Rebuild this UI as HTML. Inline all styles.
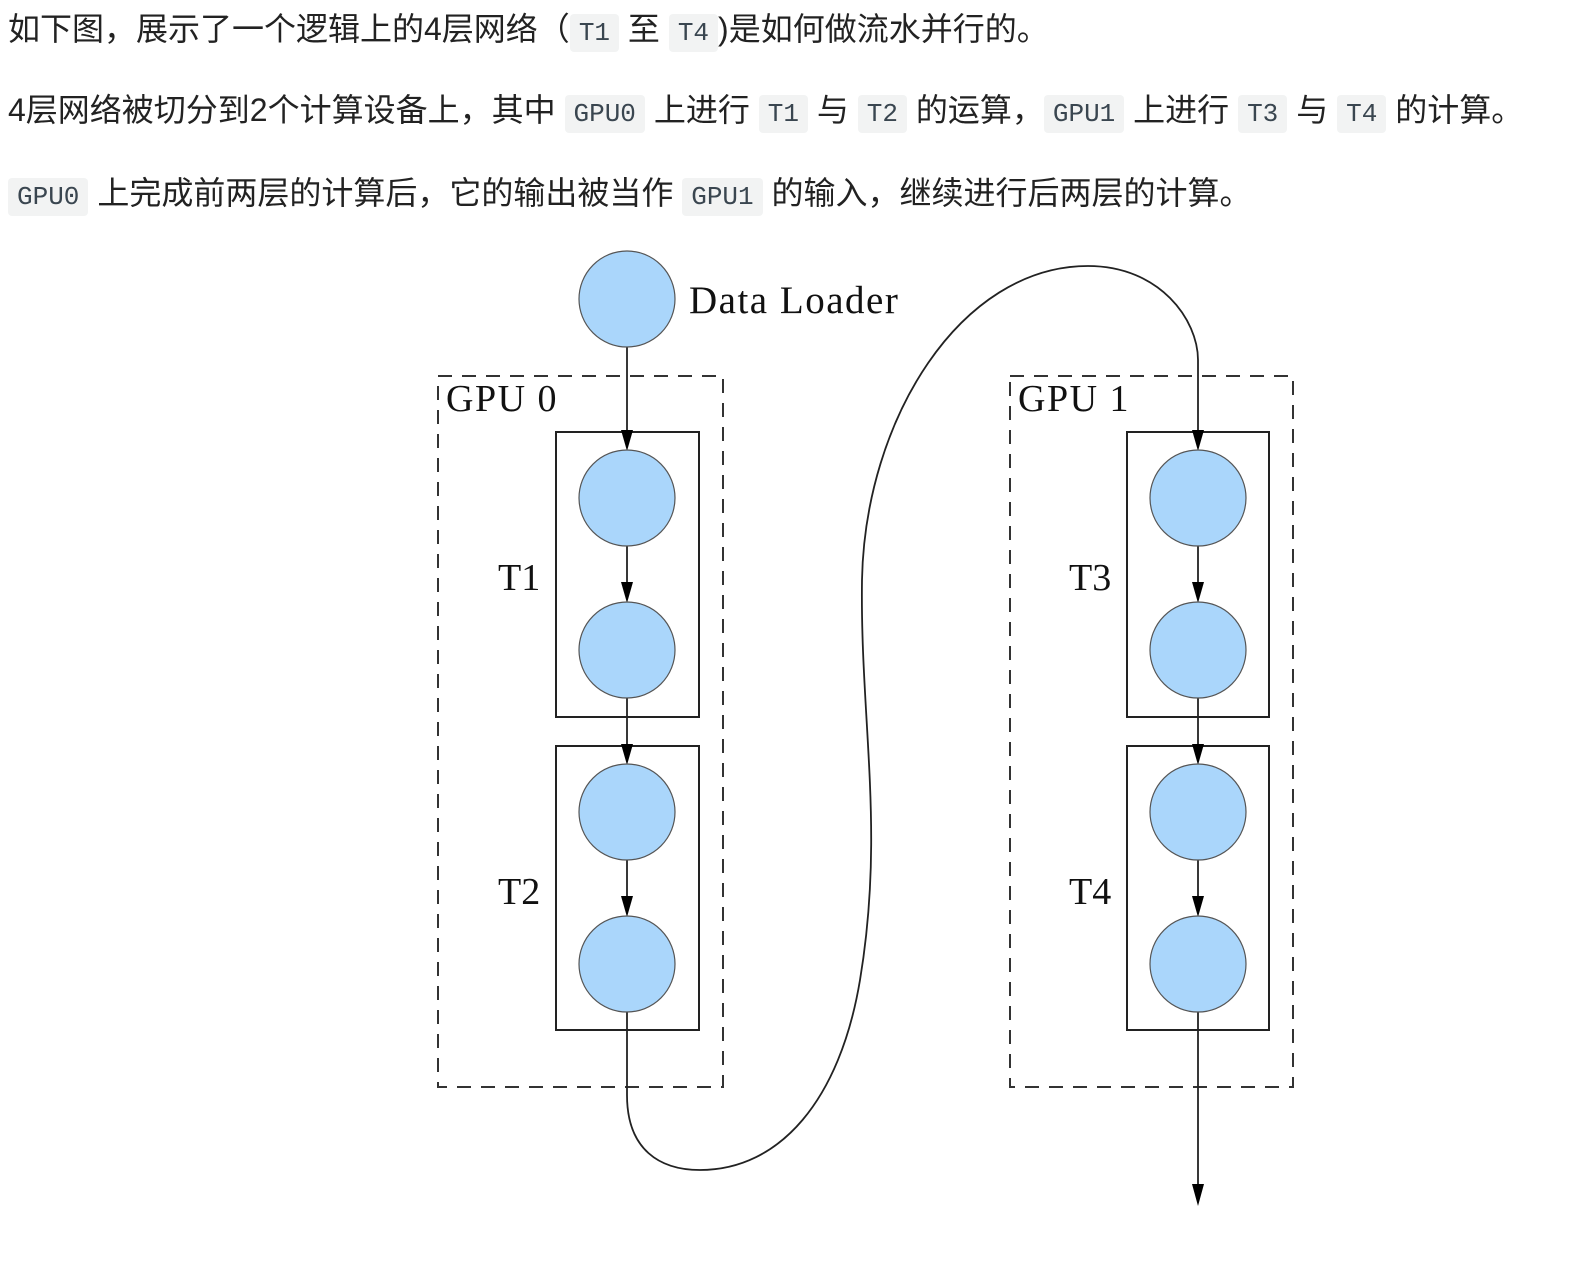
<!DOCTYPE html>
<html><head><meta charset="utf-8"><style>
html,body{margin:0;padding:0;background:#fff;width:1588px;height:1288px;overflow:hidden}
.l{position:absolute;left:8px;white-space:nowrap;font-family:"Liberation Sans","Noto Sans CJK SC",sans-serif;font-size:32px;color:#222;line-height:40px}
code{font-family:"Liberation Mono","DejaVu Sans Mono",monospace;font-size:26px;background:#f2f3f3;color:#3a4650;padding:4px 9px;border-radius:4px}
</style></head><body>
<div class="l" style="top:9px">如下图，展示了一个逻辑上的4层网络（<code>T1</code> 至 <code>T4</code>)是如何做流水并行的。</div>
<div class="l" style="top:90px">4层网络被切分到2个计算设备上，其中 <code>GPU0</code> 上进行 <code>T1</code> 与 <code>T2</code> 的运算，<code>GPU1</code> 上进行 <code>T3</code> 与 <code>T4</code> 的计算。</div>
<div class="l" style="top:173px"><code>GPU0</code> 上完成前两层的计算后，它的输出被当作 <code>GPU1</code> 的输入，继续进行后两层的计算。</div>
<svg width="1588" height="1288" style="position:absolute;left:0;top:0" xmlns="http://www.w3.org/2000/svg">
<g fill="none" stroke="#333" stroke-width="2" stroke-dasharray="14 10">
<rect x="438" y="376" width="285" height="711"/>
<rect x="1010" y="376" width="283" height="711"/>
</g>
<g fill="none" stroke="#222" stroke-width="2">
<rect x="556" y="432" width="143" height="285"/>
<rect x="556" y="746" width="143" height="284"/>
<rect x="1127" y="432" width="142" height="285"/>
<rect x="1127" y="746" width="142" height="284"/>
</g>
<g stroke="#222" stroke-width="1.8" fill="none">
<line x1="627" y1="347" x2="627" y2="440"/>
<line x1="627" y1="546" x2="627" y2="592"/>
<line x1="627" y1="698" x2="627" y2="754"/>
<line x1="627" y1="860" x2="627" y2="906"/>
<line x1="1198" y1="546" x2="1198" y2="592"/>
<line x1="1198" y1="698" x2="1198" y2="754"/>
<line x1="1198" y1="860" x2="1198" y2="906"/>
<line x1="1198" y1="1012" x2="1198" y2="1190"/>
<path d="M627 1012 L627 1095 C627 1150 660 1170 700 1170 C780 1170 840 1100 860 980 C885 830 860 720 862 580 C865 420 960 266 1088 266 C1160 266 1198 320 1198 360 L1198 440"/>
</g>
<g fill="#000">
<polygon points="621,430 633,430 627,451"/>
<polygon points="621,582 633,582 627,603"/>
<polygon points="621,744 633,744 627,765"/>
<polygon points="621,896 633,896 627,917"/>
<polygon points="1192,430 1204,430 1198,451"/>
<polygon points="1192,582 1204,582 1198,603"/>
<polygon points="1192,744 1204,744 1198,765"/>
<polygon points="1192,896 1204,896 1198,917"/>
<polygon points="1192,1184 1204,1184 1198,1206"/>
</g>
<g fill="#aad6fb" stroke="#555" stroke-width="1.2">
<circle cx="627" cy="299" r="48"/>
<circle cx="627" cy="498" r="48"/>
<circle cx="627" cy="650" r="48"/>
<circle cx="627" cy="812" r="48"/>
<circle cx="627" cy="964" r="48"/>
<circle cx="1198" cy="498" r="48"/>
<circle cx="1198" cy="650" r="48"/>
<circle cx="1198" cy="812" r="48"/>
<circle cx="1198" cy="964" r="48"/>
</g>
<g font-family="Liberation Serif,serif" font-size="38" fill="#111">
<text x="689" y="313" font-size="39" letter-spacing="1.5">Data Loader</text>
<text x="446" y="411" letter-spacing="1.5">GPU 0</text>
<text x="1018" y="411" letter-spacing="1.5">GPU 1</text>
<text x="498" y="590">T1</text>
<text x="498" y="904">T2</text>
<text x="1069" y="590">T3</text>
<text x="1069" y="904">T4</text>
</g>
</svg>
</body></html>
